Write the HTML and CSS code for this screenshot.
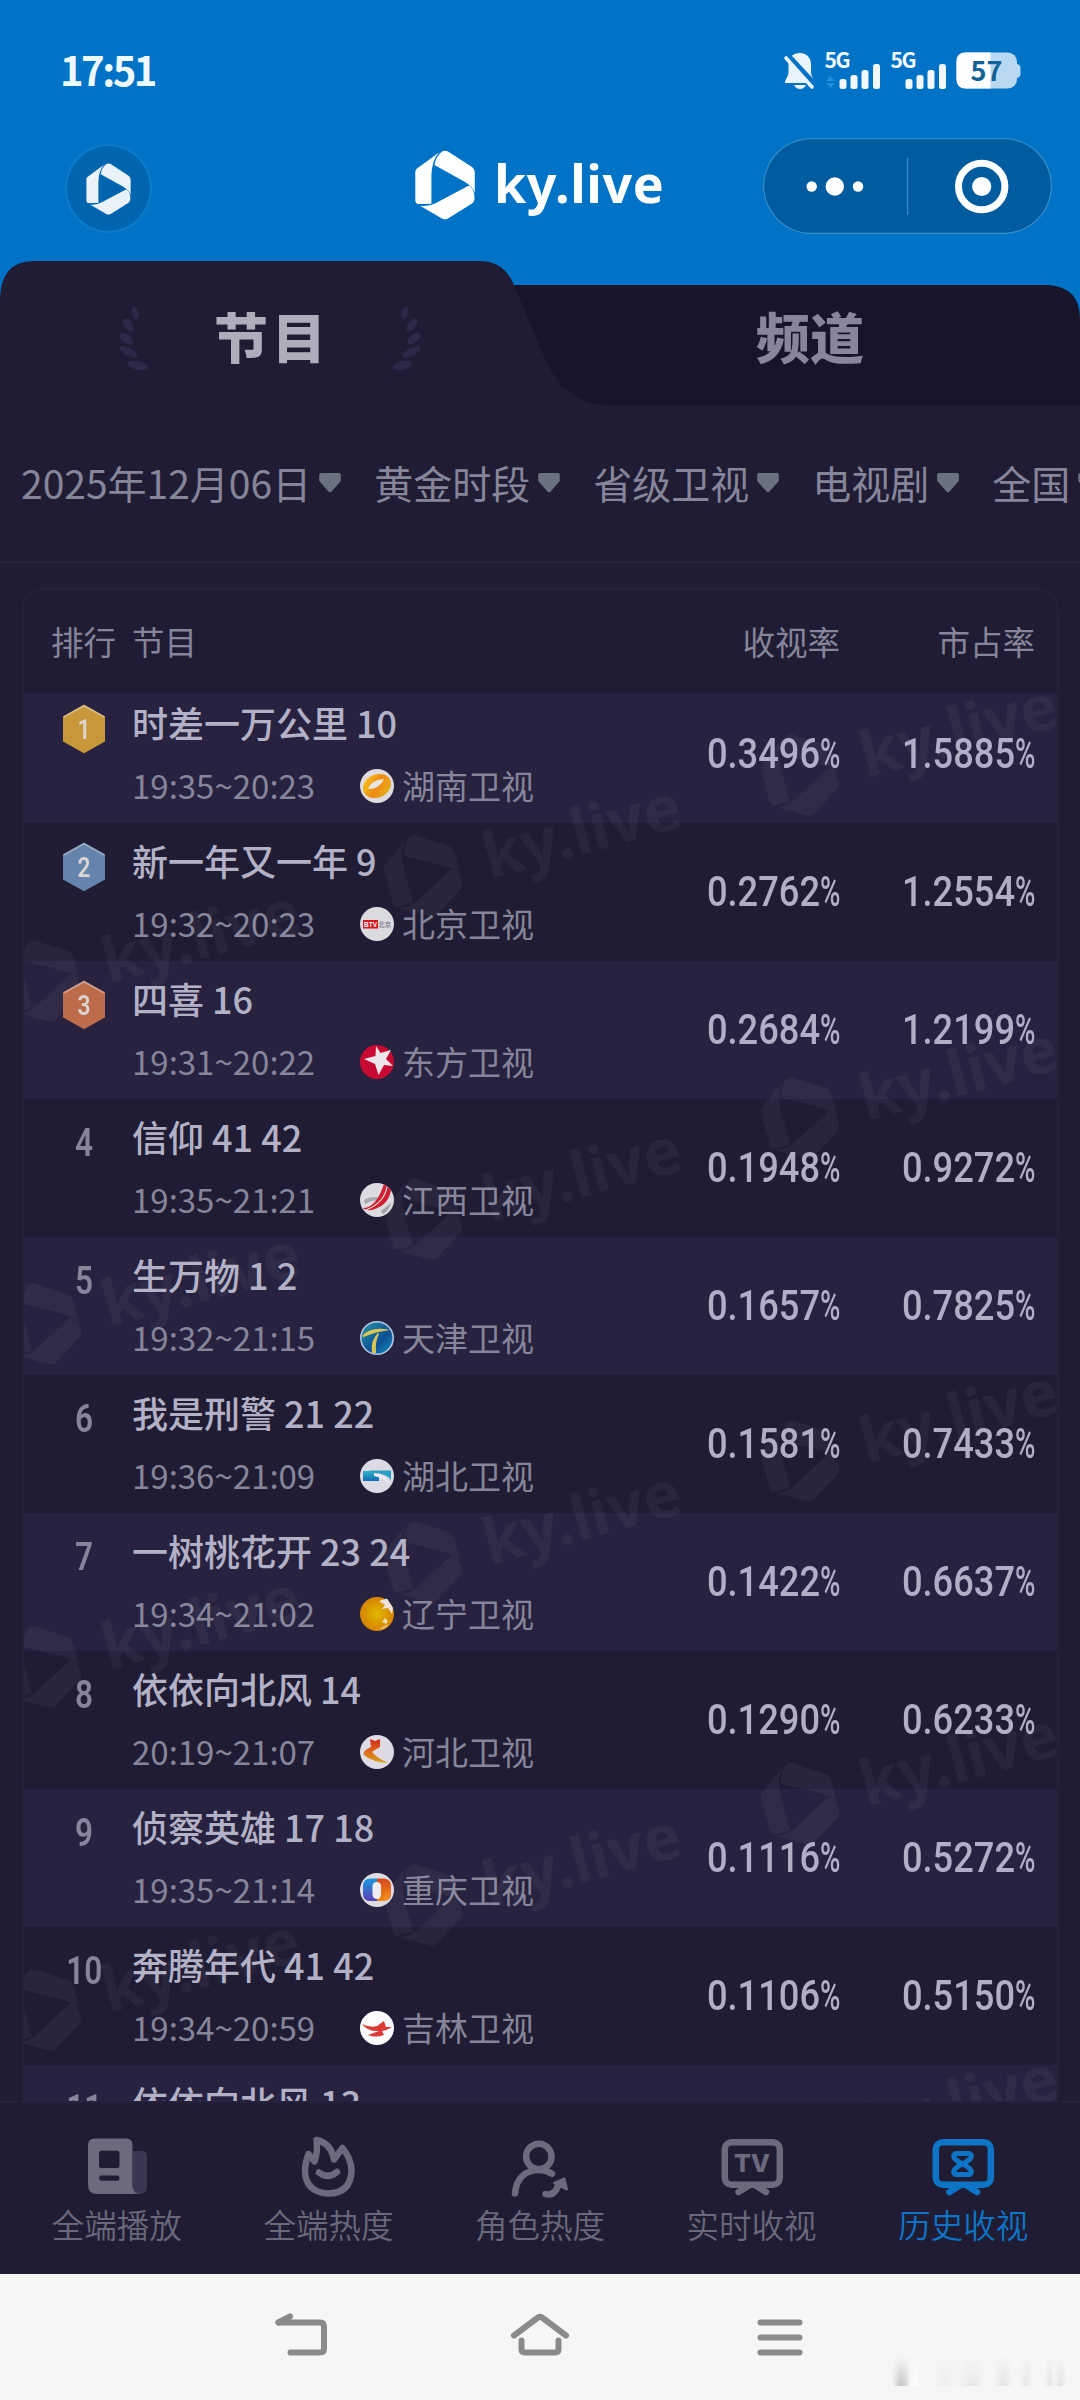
FILE: index.html
```html
<!DOCTYPE html>
<html lang="zh-CN">
<head>
<meta charset="utf-8">
<title>ky.live</title>
<link rel="stylesheet" href="styles.css">
</head>
<body>
<svg class="defs" width="0" height="0" aria-hidden="true">
  <defs>
    <symbol id="mark" viewBox="-30 -35 60 70">
      <g id="mark-shape">
        <path d="M-29.7 -13Q-29.7 -15.500 -28 -16.500L-6 -32.500Q-13 -25 -13.600 -10V18.800L-26 19Q-29.700 19 -29.700 15Z"/>
        <path d="M-3 -33.500Q0 -35.200 3 -33.500L27 -18Q29.800 -16 29.800 -12V8Q27 1 20 -3L-10.500 -20Q-9.500 -28 -3 -33.500Z"/>
        <path d="M23 1L-9 18Q-16 22 -25 20.800L-3 33.500Q0 35.200 3 33.500L27 18.500Q29.500 17 29.500 13Q29.500 6 25 1Z"/>
      </g>
    </symbol>
    <symbol id="laurel" viewBox="0 0 30 64">
      <ellipse cx="16" cy="6" rx="3.400" ry="6.500" transform="rotate(-12 16 6)"/>
      <ellipse cx="9" cy="18" rx="4" ry="7.500" transform="rotate(-35 9 18)"/>
      <ellipse cx="7" cy="31.500" rx="4" ry="8" transform="rotate(-52 7 31.500)"/>
      <ellipse cx="9.500" cy="45" rx="4" ry="10" transform="rotate(-62 9.500 45)"/>
      <ellipse cx="18.500" cy="58.500" rx="4.300" ry="10.500" transform="rotate(-76 18.500 58.500)"/>
    </symbol>
    <symbol id="hex" viewBox="0 0 44 50">
      <path d="M22 0.800L43 12.500V37.500L22 49.200L1 37.500V12.500Z"/>
      <path d="M1.500 13L22 1.600L42.500 13" fill="none" stroke="#fff" stroke-opacity=".35" stroke-width="2"/>
    </symbol>
    <g id="stamp">
      <g transform="rotate(-15) scale(1.22)">
        <use href="#mark-shape"/>
        <text x="52" y="16.500" font-size="52" font-weight="700">ky.live</text>
      </g>
    </g>
    <linearGradient id="g-orange" x1="0" y1="0" x2="1" y2="1"><stop offset="0" stop-color="#f4d21c"/><stop offset=".5" stop-color="#f08a12"/><stop offset="1" stop-color="#e2b81a"/></linearGradient>
    <radialGradient id="g-gold"><stop offset="0" stop-color="#e0b800"/><stop offset="1" stop-color="#d78300"/></radialGradient>
    <linearGradient id="g-sea" x1="0" y1="0" x2="1" y2="1"><stop offset="0" stop-color="#2a9aa6"/><stop offset=".6" stop-color="#0d4f94"/><stop offset="1" stop-color="#1596c6"/></linearGradient>
    <linearGradient id="g-cqb" x1="0" y1="0" x2="0" y2="1"><stop offset="0" stop-color="#1b96dc"/><stop offset="1" stop-color="#5a3fb4"/></linearGradient>
    <linearGradient id="g-cqo" x1="0" y1="0" x2="0" y2="1"><stop offset="0" stop-color="#d9481c"/><stop offset="1" stop-color="#f08c14"/></linearGradient>
    <linearGradient id="g-heb" x1="0" y1="0" x2="0" y2="1"><stop offset="0" stop-color="#cf2b1c"/><stop offset=".4" stop-color="#de5a1c"/><stop offset="1" stop-color="#d9a51c"/></linearGradient>
    <linearGradient id="g-hub" x1="0" y1="0" x2="0" y2="1"><stop offset="0" stop-color="#2cb6c8"/><stop offset="1" stop-color="#1668b4"/></linearGradient>
  </defs>
</svg>

<header class="top">
  <div class="status">
    <span class="clock">17:51</span>
    <svg class="status-icons" viewBox="0 0 240 42">
      <g fill="#eaf4fc">
        <path d="M16 4C22 4 27 8.500 27 15V23C27 28 30.500 30 30.500 34H1C1 30 4.500 28 4.500 23V15C4.500 8.500 9 4 16 4Z"/>
        <path d="M10 36H22Q20 40 16 40Q12 40 10 36Z"/>
      </g>
      <path d="M4 7L31 36" stroke="#0073c7" stroke-width="6"/>
      <path d="M2 9L28 38" stroke="#eaf4fc" stroke-width="3.600" stroke-linecap="round"/>
      <g fill="#f2f8fd">
        <text class="net" x="40.500" y="19">5G</text>
        <text class="net" x="106.500" y="19">5G</text>
        <rect x="55.500" y="30" width="7" height="10" rx="2.500"/><rect x="66.500" y="26" width="7" height="14" rx="2.500"/><rect x="77.500" y="21" width="7" height="19" rx="2.500"/><rect x="89" y="15" width="7" height="25" rx="2.500"/>
        <rect x="121.500" y="30" width="7" height="10" rx="2.500"/><rect x="132.500" y="26" width="7" height="14" rx="2.500"/><rect x="143.500" y="21" width="7" height="19" rx="2.500"/><rect x="155" y="15" width="7" height="25" rx="2.500"/>
      </g>
      <path d="M42 32L46.500 27L51 32ZM42 34L46.500 39L51 34Z" fill="#1a92dc"/>
      <rect x="172.500" y="3.500" width="60.500" height="36" rx="9" fill="#b9d8f2"/>
      <path d="M233 15Q236.500 15.500 236.500 19V25Q236.500 28 233 29Z" fill="#b9d8f2"/>
      <path d="M181.500 3.500H206.500V39.500H181.500Q172.500 39.500 172.500 30.500V12.500Q172.500 3.500 181.500 3.500Z" fill="#fff"/>
      <text class="battery" x="202.500" y="32" text-anchor="middle">57</text>
    </svg>
  </div>
  <div class="bar">
    <div class="home-btn"><svg width="45" height="52" fill="#e9f1f9"><use href="#mark"/></svg></div>
    <div class="brand">
      <svg width="60" height="70" fill="#fff"><use href="#mark"/></svg>
      <span>ky.live</span>
    </div>
    <div class="capsule">
      <svg width="289" height="96" viewBox="0 0 289 96" fill="#fff">
        <circle cx="48.700" cy="48.500" r="5.200"/><circle cx="71.800" cy="48.500" r="9.200"/><circle cx="95" cy="48.500" r="5.200"/>
        <path d="M144.500 20V77" stroke="#2f8fce" stroke-width="1.300"/>
        <circle cx="218.700" cy="48.500" r="23.200" fill="none" stroke="#fff" stroke-width="7"/><circle cx="218.700" cy="48.500" r="9.600"/>
      </svg>
    </div>
  </div>
</header>

<nav class="tabs">
  <svg class="tabs-bg" viewBox="0 0 1080 144">
    <path d="M470 24H1048Q1080 26 1080 58V144H470Z" fill="#18152b"/>
    <path d="M0 144V40Q0 0 34 0H480Q504 0 514 24L541 88Q553 118 566 128Q583 144 606 144Z" fill="#1f1c34"/>
  </svg>
  <div class="tab on">
    <svg class="leaf" width="30" height="64"><use href="#laurel"/></svg>
    <span>节目</span>
    <svg class="leaf flip" width="30" height="64"><use href="#laurel"/></svg>
  </div>
  <div class="tab"><span>频道</span></div>
</nav>

<div class="filters">
  <div class="filter">2025年12月06日<svg viewBox="0 0 22 20"><path d="M2 0H20Q22 0 21.800 2V8L13 18Q11 20.500 9 18L0.200 8V2Q0 0 2 0Z"/></svg></div>
  <div class="filter">黄金时段<svg viewBox="0 0 22 20"><path d="M2 0H20Q22 0 21.800 2V8L13 18Q11 20.500 9 18L0.200 8V2Q0 0 2 0Z"/></svg></div>
  <div class="filter">省级卫视<svg viewBox="0 0 22 20"><path d="M2 0H20Q22 0 21.800 2V8L13 18Q11 20.500 9 18L0.200 8V2Q0 0 2 0Z"/></svg></div>
  <div class="filter">电视剧<svg viewBox="0 0 22 20"><path d="M2 0H20Q22 0 21.800 2V8L13 18Q11 20.500 9 18L0.200 8V2Q0 0 2 0Z"/></svg></div>
  <div class="filter">全国<svg viewBox="0 0 22 20"><path d="M2 0H20Q22 0 21.800 2V8L13 18Q11 20.500 9 18L0.200 8V2Q0 0 2 0Z"/></svg></div>
</div>

<main class="board">
  <section class="card">
    <div class="head"><span class="h-rank">排行</span><span class="h-name">节目</span><span class="h-num">收视率</span><span class="h-num">市占率</span></div>
    <div class="rows">
      <svg class="stamps" viewBox="24 693 1034 1408" preserveAspectRatio="xMinYMin slice">
        <use href="#stamp" x="800" y="775"/><use href="#stamp" x="423" y="876"/><use href="#stamp" x="42" y="981"/>
        <use href="#stamp" x="800" y="1118"/><use href="#stamp" x="423" y="1219"/><use href="#stamp" x="42" y="1324"/>
        <use href="#stamp" x="800" y="1461"/><use href="#stamp" x="423" y="1562"/><use href="#stamp" x="42" y="1667"/>
        <use href="#stamp" x="800" y="1804"/><use href="#stamp" x="423" y="1905"/><use href="#stamp" x="42" y="2010"/>
        <use href="#stamp" x="800" y="2147"/>
      </svg>

      <div class="row first">
        <div class="rank medal gold"><svg><use href="#hex"/></svg><b>1</b></div>
        <div class="info"><div class="title">时差一万公里 10</div>
          <div class="meta"><span class="time">19:35~20:23</span>
            <svg viewBox="0 0 34 34"><circle cx="17" cy="17" r="17" fill="#dedbe0"/><ellipse cx="17" cy="17" rx="14.500" ry="11.500" transform="rotate(-25 17 17)" fill="url(#g-orange)"/><path d="M8 20Q12 10 24 10Q20 20 8 20Z" fill="#e8e4e0"/></svg>
            湖南卫视</div></div>
        <div class="num"><b>0.3496</b><i>%</i></div><div class="num"><b>1.5885</b><i>%</i></div>
      </div>
      <div class="row">
        <div class="rank medal silver"><svg><use href="#hex"/></svg><b>2</b></div>
        <div class="info"><div class="title">新一年又一年 9</div>
          <div class="meta"><span class="time">19:32~20:23</span>
            <svg viewBox="0 0 34 34"><circle cx="17" cy="17" r="17" fill="#dcdade"/><rect x="3" y="13" width="15" height="8.500" fill="#d8151c"/><text x="10.500" y="19.700" class="btv">BTV</text><text x="24.700" y="19.700" class="btv grey">北京</text></svg>
            北京卫视</div></div>
        <div class="num"><b>0.2762</b><i>%</i></div><div class="num"><b>1.2554</b><i>%</i></div>
      </div>
      <div class="row">
        <div class="rank medal bronze"><svg><use href="#hex"/></svg><b>3</b></div>
        <div class="info"><div class="title">四喜 16</div>
          <div class="meta"><span class="time">19:31~20:22</span>
            <svg viewBox="0 0 34 34"><circle cx="17" cy="17" r="17" fill="#c80a32"/><path d="M16 1L20.500 8L31 5L26 14L33 21L24 20L18.500 30L15 19L4 14L15.500 11Z" fill="#ece6ec"/></svg>
            东方卫视</div></div>
        <div class="num"><b>0.2684</b><i>%</i></div><div class="num"><b>1.2199</b><i>%</i></div>
      </div>
      <div class="row">
        <div class="rank"><b>4</b></div>
        <div class="info"><div class="title">信仰 41 42</div>
          <div class="meta"><span class="time">19:35~21:21</span>
            <svg viewBox="0 0 34 34"><circle cx="17" cy="17" r="17" fill="#dcdce0"/><path d="M4 17Q15 11 23 17L21 19Q13 15 5 21Z" fill="#a5a8b0"/><path d="M24 1L31 7Q29 21 15 26Q7 29 3 25Q16 25 24 1Z" fill="#cf1f30"/><path d="M27 4Q24 20 6 27" fill="none" stroke="#f2e6e8" stroke-width="1.200"/><path d="M21 28L31 20Q29 28 23 31Z" fill="#9da0a8"/></svg>
            江西卫视</div></div>
        <div class="num"><b>0.1948</b><i>%</i></div><div class="num"><b>0.9272</b><i>%</i></div>
      </div>
      <div class="row">
        <div class="rank"><b>5</b></div>
        <div class="info"><div class="title">生万物 1 2</div>
          <div class="meta"><span class="time">19:32~21:15</span>
            <svg viewBox="0 0 34 34"><circle cx="17" cy="17" r="16.200" fill="url(#g-sea)" stroke="#b4c6e0" stroke-width="1.600"/><path d="M2 15Q11 5 30 9Q14 11 4 16Z" fill="#d8c65a"/><path d="M18 12Q10 20 12 32L16 32Q15 20 19 13Z" fill="#d8c65a"/></svg>
            天津卫视</div></div>
        <div class="num"><b>0.1657</b><i>%</i></div><div class="num"><b>0.7825</b><i>%</i></div>
      </div>
      <div class="row">
        <div class="rank"><b>6</b></div>
        <div class="info"><div class="title">我是刑警 21 22</div>
          <div class="meta"><span class="time">19:36~21:09</span>
            <svg viewBox="0 0 34 34"><circle cx="17" cy="17" r="17" fill="#dcdae2"/><path d="M3 12H19V22H3Z" fill="url(#g-hub)"/><path d="M9 11.500H31V21Q27 15 16 14.500Z" fill="#2c9fc4"/><path d="M14 14Q26 14 30 26Q24 19 14 17Z" fill="#eceaf2"/></svg>
            湖北卫视</div></div>
        <div class="num"><b>0.1581</b><i>%</i></div><div class="num"><b>0.7433</b><i>%</i></div>
      </div>
      <div class="row">
        <div class="rank"><b>7</b></div>
        <div class="info"><div class="title">一树桃花开 23 24</div>
          <div class="meta"><span class="time">19:34~21:02</span>
            <svg viewBox="0 0 34 34"><circle cx="17" cy="17" r="17" fill="url(#g-gold)"/><path d="M19 4L27 1.500L33 11L32 17L28 11L22 12L25 8Z" fill="#ece4da"/><path d="M25 21L28 24L26 27L22 25ZM29 27L19 32Q25 32 29 27Z" fill="#f0dcae"/></svg>
            辽宁卫视</div></div>
        <div class="num"><b>0.1422</b><i>%</i></div><div class="num"><b>0.6637</b><i>%</i></div>
      </div>
      <div class="row">
        <div class="rank"><b>8</b></div>
        <div class="info"><div class="title">依依向北风 14</div>
          <div class="meta"><span class="time">20:19~21:07</span>
            <svg viewBox="0 0 34 34"><circle cx="17" cy="17" r="17" fill="#dedbe4"/><path d="M10 4L15 6L20 4V12L12 17Q17 23 28 28Q12 27 4 20Q2 16 11 12Z" fill="url(#g-heb)"/></svg>
            河北卫视</div></div>
        <div class="num"><b>0.1290</b><i>%</i></div><div class="num"><b>0.6233</b><i>%</i></div>
      </div>
      <div class="row">
        <div class="rank"><b>9</b></div>
        <div class="info"><div class="title">侦察英雄 17 18</div>
          <div class="meta"><span class="time">19:35~21:14</span>
            <svg viewBox="0 0 34 34"><circle cx="17" cy="17" r="17" fill="#dedbe4"/><path d="M17 5.500H10Q3 6 3 13V21Q3 28 10 28H17Z" fill="url(#g-cqb)"/><path d="M17 5.500H24Q31 6 31 13V21Q31 28 24 28H17Z" fill="url(#g-cqo)"/><rect x="12.500" y="9" width="8.500" height="17" rx="4.200" fill="#f0edf6"/></svg>
            重庆卫视</div></div>
        <div class="num"><b>0.1116</b><i>%</i></div><div class="num"><b>0.5272</b><i>%</i></div>
      </div>
      <div class="row">
        <div class="rank"><b>10</b></div>
        <div class="info"><div class="title">奔腾年代 41 42</div>
          <div class="meta"><span class="time">19:34~20:59</span>
            <svg viewBox="0 0 34 34"><circle cx="17" cy="17" r="17" fill="#fbfafc"/><path d="M2 13Q10 17 17 15L24 10L26 16L32 16Q28 19 22 20L24 24Q15 27 8 24L19 20Q8 21 2 13Z" fill="#da3b35"/></svg>
            吉林卫视</div></div>
        <div class="num"><b>0.1106</b><i>%</i></div><div class="num"><b>0.5150</b><i>%</i></div>
      </div>
      <div class="row">
        <div class="rank"><b>11</b></div>
        <div class="info"><div class="title">依依向北风 13</div></div>
      </div>
    </div>
  </section>
</main>

<footer class="dock">
  <div class="dock-item"><svg viewBox="0 0 64 64">
    <path d="M48 16H57Q62 16 62 21V52Q62 59 55 59H48Z" fill="#3b3750"/>
    <path fill-rule="evenodd" d="M10 3.500H41Q47.500 3.500 47.500 10V50Q47.500 59 55 59H12Q3 59 3 50V10Q3 3.500 10 3.500ZM16.500 15.700Q14 15.700 14 18V30.500Q14 33 16.500 33H32Q34.500 33 34.500 30.500V18Q34.500 15.700 32 15.700ZM16.500 40.500Q14 40.500 14 43T16.500 45.700H32Q34.500 45.700 34.500 43T32 40.500Z" fill="currentColor"/></svg><span>全端播放</span></div>
  <div class="dock-item"><svg viewBox="0 0 64 64" class="line"><path d="M20.500 5Q35 8 38 24.500L46.500 13Q55.500 24 55.500 36Q54.500 58.500 32 58.500Q9.500 57 9 36Q9 28 12.500 19L18.500 26.500Q22 17 20.500 5Z"/><path d="M23 37.500Q32 44.500 41 37"/></svg><span>全端热度</span></div>
  <div class="dock-item"><svg viewBox="0 0 64 64" class="line"><circle cx="30.800" cy="21.500" r="12.700"/><path d="M7 58.500C8 43 18 35 31 35Q38 35 44 38.700M37.500 59Q46 61.500 50 51"/><path d="M46 48L56.500 43.500L59 54.500Z" fill="currentColor" stroke-width="2"/></svg><span>角色热度</span></div>
  <div class="dock-item"><svg viewBox="0 0 64 64" class="line"><rect x="4.800" y="7.300" width="55" height="42.500" rx="7"/><path d="M18.500 57L29 50.500M46 57L35.500 50.500"/><path d="M22 52L32 48L43 52Z" fill="currentColor" stroke="none"/><text x="32" y="36.500" class="tv">TV</text></svg><span>实时收视</span></div>
  <div class="dock-item on"><svg viewBox="0 0 64 64" class="line"><rect x="4.800" y="7.300" width="55" height="42.500" rx="7"/><path d="M18.500 57L29 50.500M46 57L35.500 50.500"/><path d="M22 52L32 48L43 52Z" fill="currentColor" stroke="none"/><path d="M24.500 18.500H38.500Q42 20.500 39 24Q35.500 27 31.500 29Q27.500 27 24 24Q21 20.500 24.500 18.500ZM31.500 29Q35.500 30.500 39 34Q42 37.500 38.500 39.500H24.500Q21 37.500 24 34Q27.500 30.500 31.500 29Z" stroke-width="5"/></svg><span>历史收视</span></div>
</footer>

<div class="sysnav">
  <svg viewBox="0 0 60 60" class="sys back"><path d="M8.500 17.500H50Q54 17.500 54 21.500V43.500Q54 47.500 50 47.500H20.500"/><path d="M8.500 17.500L20 11.500"/><path d="M8.500 17.500L21 11V17.500Z" fill="currentColor" stroke="none"/></svg>
  <svg viewBox="0 0 60 60" class="sys"><path d="M4 30.500L28 12.500Q30 11.200 32 12.500L56 30.500"/><path d="M11.500 35.500V44Q11.500 47.500 15 47.500H45Q48.500 47.500 48.500 44V35.500"/></svg>
  <svg viewBox="0 0 60 60" class="sys"><path d="M10.500 17.500H49.500M10.500 32.500H49.500M10.500 47.500H49.500"/></svg>
  <div class="smudge"></div>
</div>
</body>
</html>
```
FILE: styles.css
```css
* { box-sizing: border-box; }
body {
  margin: 0;
  width: 1080px;
  height: 2400px;
  overflow: hidden;
  display: flex;
  flex-direction: column;
  background: #1f1c34;
  color: #86859a;
  font-family: "Noto Sans CJK SC", "Noto Sans", sans-serif;
}
svg { display: block; flex: none; }
.defs { position: absolute; }

/* blue header */
.top { height: 261px; background: #0073c7; }
.status {
  height: 104px;
  padding: 36px 60px 0 60px;
  display: flex;
  justify-content: space-between;
}
.clock {
  font-size: 40px;
  font-weight: 700;
  line-height: 66px;
  letter-spacing: -2.500px;
  color: #eefaff;
}
.status-icons { width: 240px; height: 42px; margin-top: 13px; margin-right: -4px; overflow: visible; }
.net { font: 700 21px "Noto Sans CJK SC", sans-serif; letter-spacing: -1.500px; }
.battery { font: 700 27px "Noto Sans CJK SC", sans-serif; fill: #136199; }
.bar {
  height: 157px;
  padding: 34px 28px 27px 65px;
  display: grid;
  grid-template-columns: 350px 1fr 289px;
  align-items: start;
}
.home-btn {
  width: 87px;
  height: 89px;
  margin-top: 6px;
  border: 2px solid #0b7ccb;
  border-radius: 50%;
  background: #0065ae;
  display: flex;
  align-items: center;
  justify-content: center;
}
.brand { display: flex; align-items: center; gap: 19px; margin-top: 12px; }
.brand span {
  font: 700 52px/70px "Noto Sans", sans-serif;
  letter-spacing: .6px;
  color: #fff;
  margin-top: -5px;
}
.capsule {
  height: 96px;
  border-radius: 48px;
  background: #005c9f;
  box-shadow: inset 0 0 0 1.300px #2f8fce;
}

/* tabs */
.tabs { position: relative; height: 144px; display: flex; background: #0073c7; }
.tabs-bg { position: absolute; inset: 0; width: 1080px; height: 144px; }
.tab {
  position: relative;
  flex: 1;
  display: flex;
  align-items: center;
  justify-content: center;
  gap: 65px;
  padding-top: 12px;
  color: #87869a;
}
.tab span {
  font-size: 54px;
  font-weight: 900;
  line-height: 60px;
  margin-top: -7px;
}
.tab.on { color: #adadbb; }
.tab.on span { letter-spacing: 4px; margin-right: -4px; }
.leaf { fill: #2c2848; margin-top: -1px; }
.flip { transform: scaleX(-1); }

/* filters */
.filters {
  height: 158px;
  padding-left: 21px;
  display: flex;
  align-items: center;
  gap: 33px;
  overflow: hidden;
  border-bottom: 2px solid #242139;
}
.filter {
  flex: none;
  display: flex;
  align-items: center;
  gap: 8px;
  font-size: 39px;
  line-height: 60px;
  margin-top: -3px;
  white-space: nowrap;
}
.filter svg { width: 22px; height: 20px; fill: #6a717f; margin-top: 2px; }

/* ranking card */
.board { height: 1538px; padding: 25px 21px 0 22px; overflow: hidden; }
.card {
  height: 1600px;
  border: 2px solid #242139;
  border-radius: 22px;
}
.head {
  height: 103px;
  padding: 0 22px 2px 27px;
  display: flex;
  align-items: center;
  font-size: 32.500px;
}
.h-rank { width: 81px; }
.h-name { flex: 1; }
.h-num { width: 195px; text-align: right; }
.rows { position: relative; }
.stamps {
  position: absolute;
  left: 0;
  top: 0;
  width: 1034px;
  height: 1408px;
  fill: #fff;
  fill-opacity: .042;
  font-family: "Noto Sans", sans-serif;
}
.row {
  height: 138px;
  padding-right: 22px;
  display: flex;
  align-items: flex-start;
}
.row:nth-of-type(odd) { background: #27223f; }
.row.first { height: 130px; margin-bottom: 0; }
.row.first > * { margin-top: -8px; }
.rank {
  position: relative;
  width: 108px;
  height: 87px;
  padding-left: 12px;
  display: flex;
  align-items: center;
  justify-content: center;
}
.rank b {
  font: 600 39px/40px Roboto, sans-serif;
  transform: scaleX(.81);
}
.medal svg { position: absolute; left: 38px; top: 19px; width: 44px; height: 50px; }
.medal b { position: relative; font-size: 28px; color: #ddd5d0; margin-top: 2px; }
.gold svg { fill: #c7973a; }
.silver svg { fill: #6484ac; }
.bronze svg { fill: #bc6c4b; }
.info { flex: 1; }
.title {
  margin-top: 11px;
  font-size: 36px;
  line-height: 52px;
  font-weight: 500;
  color: #b3b1c6;
  white-space: nowrap;
}
.meta {
  display: flex;
  align-items: center;
  margin-top: 13px;
  font-size: 33px;
  line-height: 48px;
}
.time { width: 228px; }
.meta svg { width: 34px; height: 34px; margin: 2px 8px 0 0; }
.btv { font: 700 6.500px "Liberation Sans", "Noto Sans CJK SC", sans-serif; fill: #fff; text-anchor: middle; }
.grey { fill: #8a8a92; }
.num {
  width: 195px;
  height: 138px;
  display: flex;
  align-items: center;
  justify-content: flex-end;
  font: 500 42px/50px Roboto, sans-serif;
  color: #b1afc6;
}
.num b { font-weight: 500; transform: scaleX(.863); transform-origin: right; }
.num i { font-style: normal; width: 20px; transform: scaleX(.66); transform-origin: left; }

/* bottom dock */
.dock {
  position: relative;
  height: 173px;
  padding: 34px 11px 0;
  display: flex;
  background: #1f1c34;
  border-top: 2px solid #25213b;
}
.dock-item {
  flex: 1;
  display: flex;
  flex-direction: column;
  align-items: center;
  color: #6d6a7d;
}
.dock-item svg { width: 64px; height: 64px; margin-top: -2px; }
.dock-item span { font-size: 32.500px; font-weight: 350; line-height: 48px; margin-top: 1px; color: #6a687b; }
.dock-item.on, .dock-item.on span { color: #0d74c6; }
.line { fill: none; stroke: currentColor; stroke-width: 6.500; stroke-linecap: round; stroke-linejoin: round; }
.tv { font: 800 25px Inter, sans-serif; fill: currentColor; stroke: none; text-anchor: middle; }

/* system navigation */
.sysnav {
  position: relative;
  height: 126px;
  padding: 31px 270px 0;
  display: flex;
  justify-content: space-between;
  background: #f6f6f6;
}
.sys { width: 60px; height: 60px; color: #8a8a8a; fill: none; stroke: currentColor; stroke-width: 6; stroke-linecap: round; stroke-linejoin: round; }
.smudge {
  position: absolute;
  left: 890px;
  top: 82px;
  width: 180px;
  height: 30px;
  background: linear-gradient(90deg, transparent 1%, #c4c4c4 6%, #d6d6d6 9%, transparent 11%, #fff 14%, transparent 17%, transparent 24%, #ededed 30%, #f4f4f4 38%, #e8e8e8 44%, #ebebeb 49%, transparent 52%, transparent 58%, #e2e2e2 63%, transparent 68%, transparent 72%, #e5e5e5 76%, transparent 79%, transparent 86%, #e2e2e2 89%, #f4f4f4 91%, #e2e2e2 95%, transparent 98%);
  -webkit-mask-image: linear-gradient(transparent, #000);
  mask-image: linear-gradient(transparent, #000);
}
```
